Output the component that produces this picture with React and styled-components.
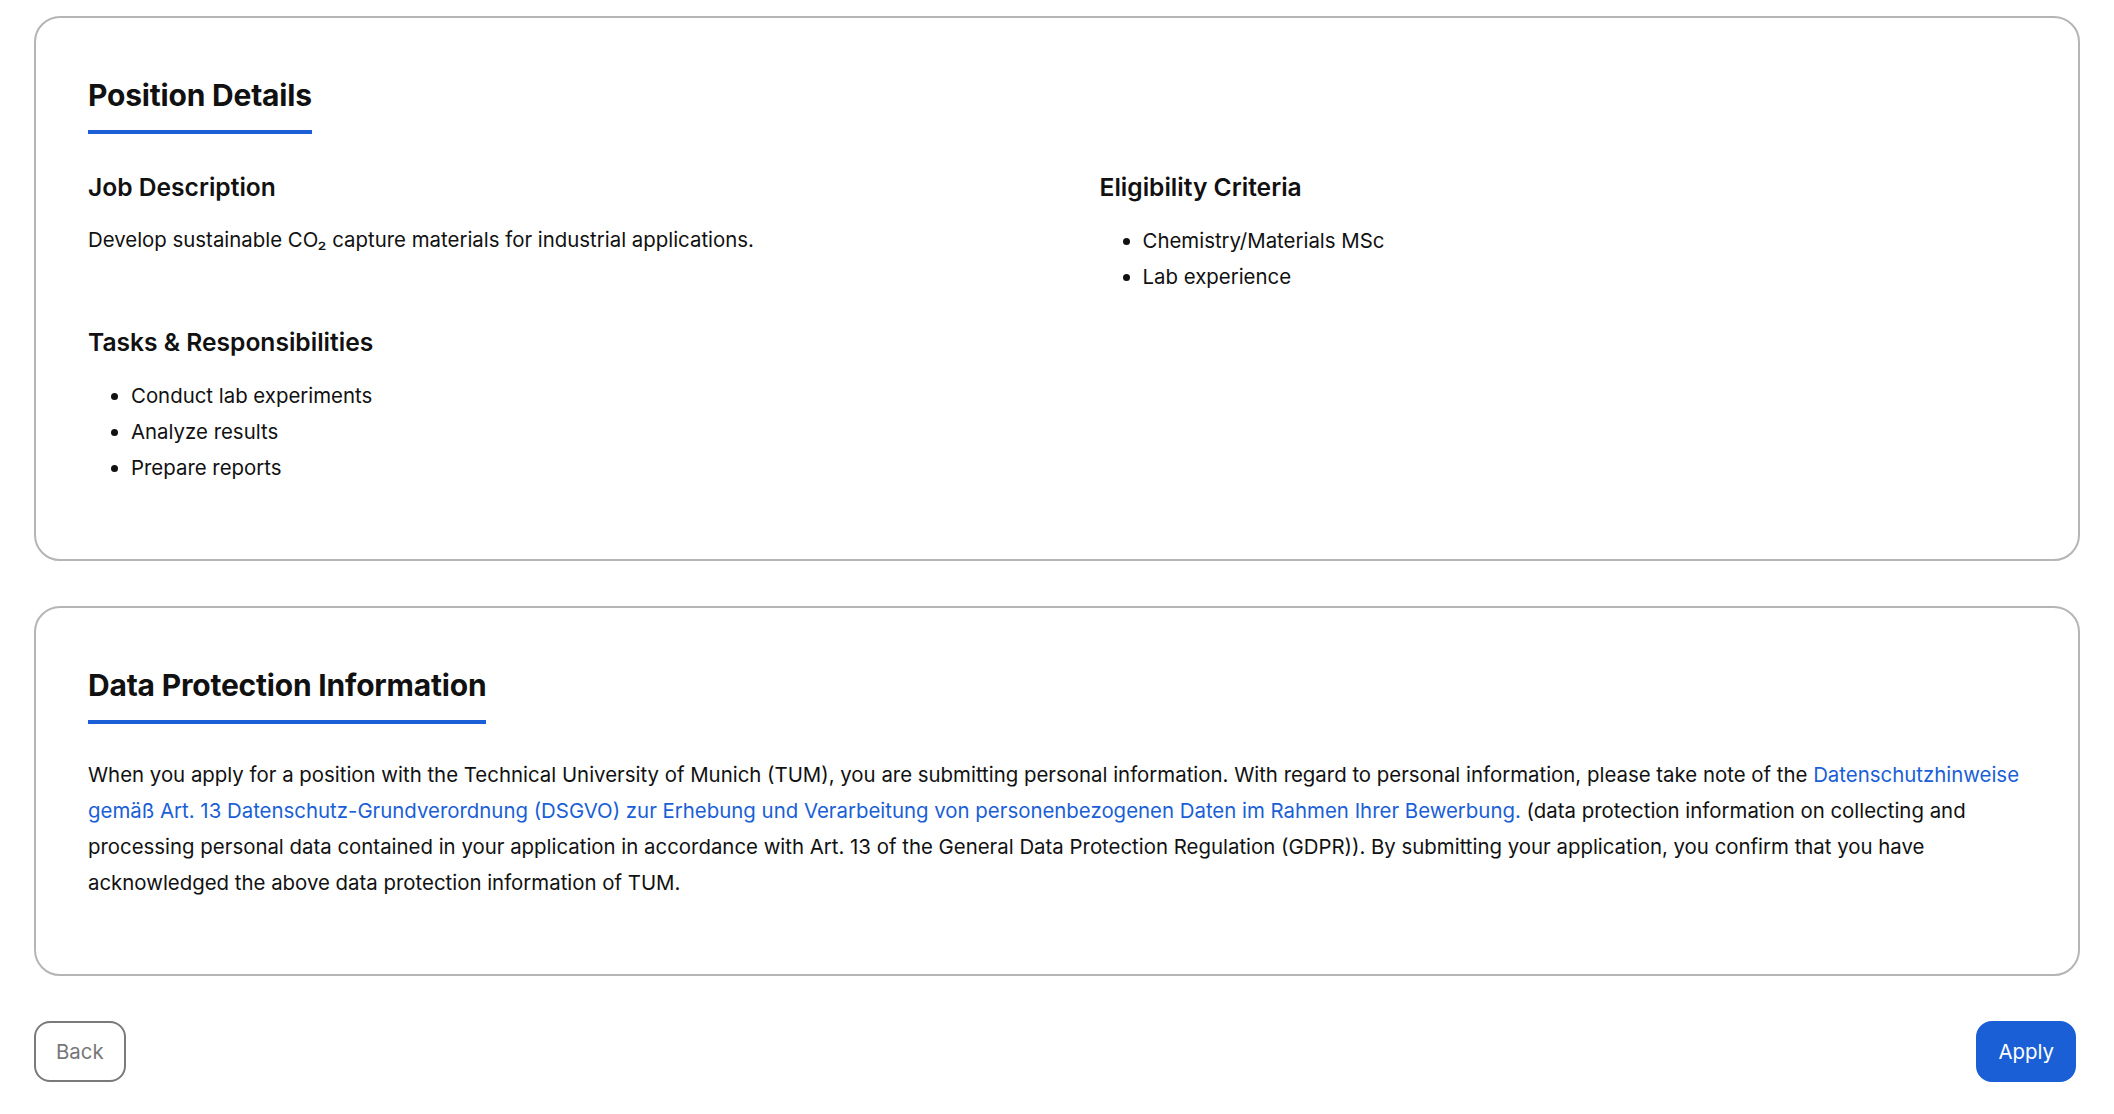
import styled, { createGlobalStyle } from "styled-components"

const GlobalStyle = createGlobalStyle`
body {
  margin: 0;
  background: #fff;
  font-family: Inter, "Noto Sans", sans-serif;
  color: #111;
}
`

const tasks = ["Conduct lab experiments", "Analyze results", "Prepare reports"]
const criteria = ["Chemistry/Materials MSc", "Lab experience"]

export default function App() {
    return (
        <Page>
            <GlobalStyle />
            <Card>
                <SectionTitle>Position Details</SectionTitle>
                <Columns>
                    <Column>
                        <SubTitle>Job Description</SubTitle>
                        <Text>Develop sustainable CO₂ capture materials for industrial applications.</Text>
                        <SubTitle spaced>Tasks &amp; Responsibilities</SubTitle>
                        <List>
                            {tasks.map(t => <Item key={t}>{t}</Item>)}
                        </List>
                    </Column>
                    <Column>
                        <SubTitle>Eligibility Criteria</SubTitle>
                        <List>
                            {criteria.map(c => <Item key={c}>{c}</Item>)}
                        </List>
                    </Column>
                </Columns>
            </Card>
            <Card>
                <SectionTitle>Data Protection Information</SectionTitle>
                <Paragraph>
                    When you apply for a position with the Technical University of Munich (TUM), you are submitting personal information. With regard to personal information, please take note of the{" "}
                    <TextLink href="#">Datenschutzhinweise gemäß Art. 13 Datenschutz-Grundverordnung (DSGVO) zur Erhebung und Verarbeitung von personenbezogenen Daten im Rahmen Ihrer Bewerbung.</TextLink>{" "}
                    (data protection information on collecting and processing personal data contained in your application in accordance with Art. 13 of the General Data Protection Regulation (GDPR)). By submitting your application, you confirm that you have acknowledged the above data protection information of TUM.
                </Paragraph>
            </Card>
            <Actions>
                <Button>Back</Button>
                <Button primary>Apply</Button>
            </Actions>
        </Page>
    )
}

// Page styling
const Page = styled.main`
padding: 16px 34px 32px;
display: flex;
flex-direction: column;
gap: 45px;
`
const Card = styled.section`
border: 2px solid #b5b5b5;
border-radius: 26px;
padding: 59px 52px 73px;
`
const SectionTitle = styled.h2`
display: inline-block;
margin: 0;
font-size: 30px;
line-height: 36px;
font-weight: 700;
padding-bottom: 17px;
border-bottom: 4px solid #1a5fd6;
letter-spacing: -0.2px;
`
const Columns = styled.div`
display: grid;
grid-template-columns: 1fr 1fr;
column-gap: 85px;
margin-top: 38px;
`
const Column = styled.div`
display: flex;
flex-direction: column;
`
const SubTitle = styled.h3`
margin: ${({spaced}) => (spaced ? "69px 0 0" : "0")};
font-size: 24.6px;
line-height: 30px;
font-weight: 600;
`
const Text = styled.p`
margin: 20px 0 0;
font-size: 20.4px;
line-height: 36px;
`
const List = styled.ul`
margin: 21px 0 0;
padding-left: 43px;
font-size: 20.4px;
line-height: 36px;
`
const Item = styled.li``
const Paragraph = styled.p`
margin: 33px 0 0;
font-size: 20.4px;
line-height: 36px;
`
const TextLink = styled.a`
color: #1a5fd6;
text-decoration: none;
`
const Actions = styled.div`
display: flex;
justify-content: space-between;
align-items: center;
padding-right: 4px;
`
const Button = styled.button`
height: 61px;
padding: 0 20px;
font-family: Inter, "Noto Sans", sans-serif;
font-size: 20.4px;
border-radius: 16px;
cursor: pointer;
border: 2px solid ${({primary}) => (primary ? "#1a5fd6" : "#7a7a7a")};
background: ${({primary}) => (primary ? "#1a5fd6" : "#fff")};
color: ${({primary}) => (primary ? "#fff" : "#777")};
`
